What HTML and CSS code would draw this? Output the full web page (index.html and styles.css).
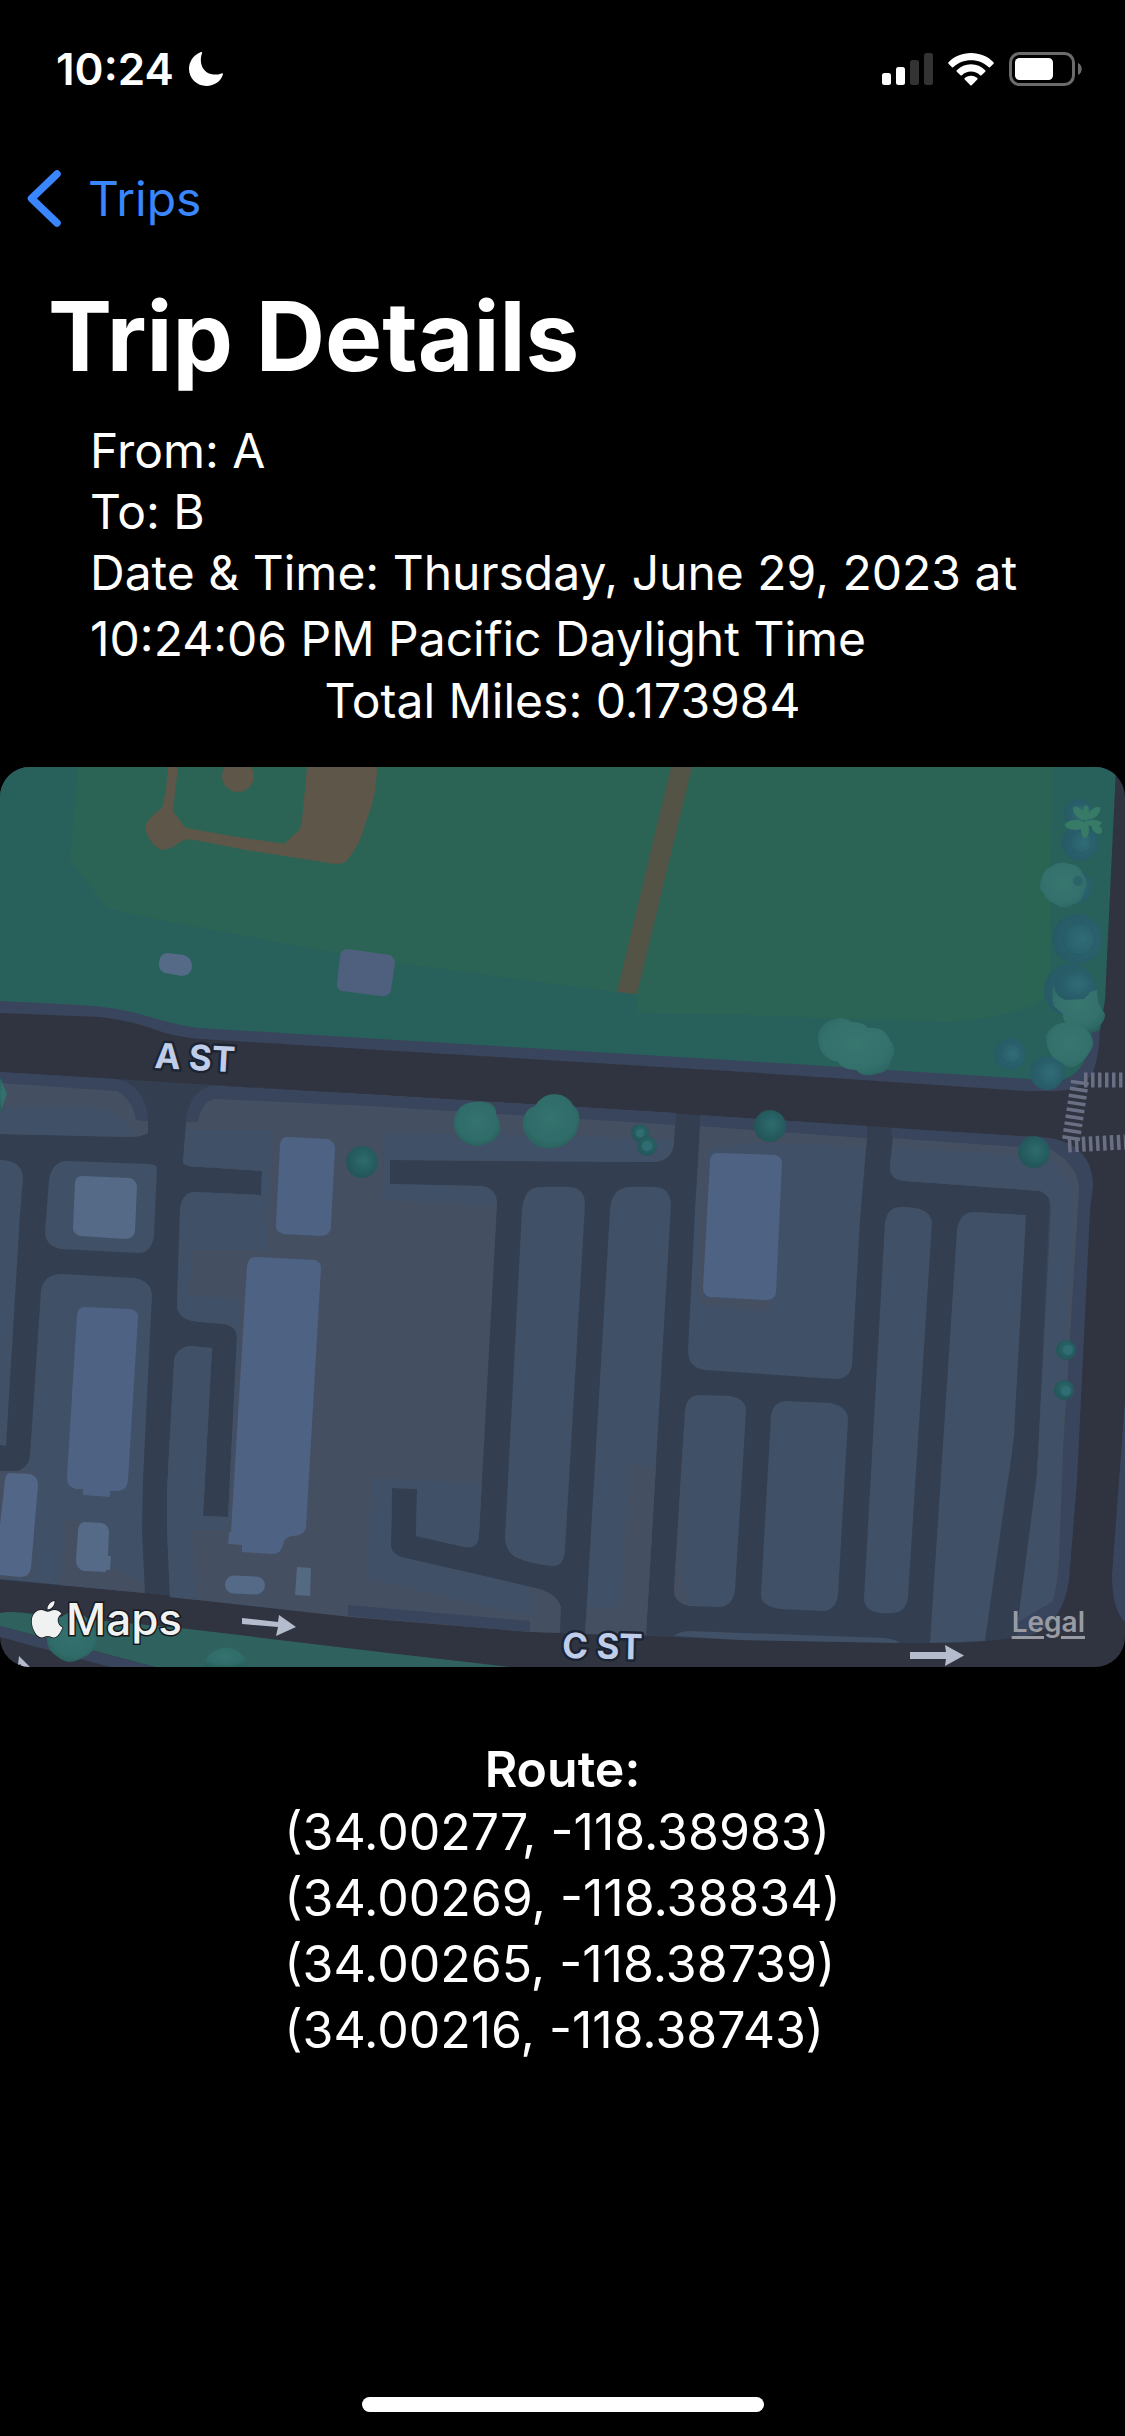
FILE: index.html
```html
<!DOCTYPE html>
<html lang="en">
<head>
<meta charset="utf-8">
<meta name="viewport" content="width=device-width, initial-scale=1">
<title>Trip Details</title>
<link rel="stylesheet" href="styles.css">
</head>
<body>
<div class="screen">
  <header class="status-bar">
    <div class="status-time">
      <span>10:24</span>
      <svg class="icon-moon" viewBox="0 0 36 36" aria-hidden="true"><path d="M12.500 1.200C5.500 4 1 10.500 1 17.800C1 27.500 8.800 35 18.500 35C26.500 35 32.800 30.500 34.900 23.600C35.200 22.500 34.600 21.900 33.500 22.400C30.500 23.500 28 23.700 25.500 23.500C18 22.800 13.500 17.500 12.900 10.500C12.700 7.500 13.100 5 14 2.300C14.400 1.200 13.700 .7 12.500 1.200Z" fill="#fff"/></svg>
    </div>
    <div class="status-icons">
      <svg class="icon-signal" viewBox="0 0 51 32" aria-hidden="true">
        <rect x="0" y="20" width="9" height="12" rx="2.500" fill="#fff"/>
        <rect x="14" y="14" width="9" height="18" rx="2.500" fill="#fff"/>
        <rect x="28" y="7" width="9" height="25" rx="2.500" fill="#333"/>
        <rect x="42" y="0" width="9" height="32" rx="2.500" fill="#333"/>
      </svg>
      <svg class="icon-wifi" viewBox="0 0 46 33" aria-hidden="true" fill="#fff">
        <path d="M23 0C32 0 40 3.500 45.500 9.200Q46.200 10 45.500 10.700L42 14.200Q41.300 14.800 40.500 14.100C36 9.800 30 7.200 23 7.200S10 9.800 5.500 14.100Q4.700 14.800 4 14.200L.5 10.700Q-.2 10 .5 9.200C6 3.500 14 0 23 0Z"/>
        <path d="M23 11.300C28.500 11.300 33.500 13.500 37.200 17.200Q37.900 18 37.200 18.700L33.500 22.300Q32.800 22.900 32 22.200C29.600 20 26.500 18.600 23 18.600S16.400 20 14 22.200Q13.200 22.900 12.500 22.300L8.800 18.700Q8.100 18 8.800 17.200C12.500 13.500 17.500 11.300 23 11.300Z"/>
        <path d="M23 22.800C25.700 22.800 28 23.800 29.300 25.100Q30 25.900 29.300 26.600L23.700 32.200Q23 32.900 22.300 32.200L16.700 26.600Q16 25.900 16.700 25.100C18 23.800 20.300 22.800 23 22.800Z"/>
      </svg>
      <svg class="icon-battery" viewBox="0 0 73 34" aria-hidden="true">
        <rect x="1.500" y="1.500" width="63" height="31" rx="9" fill="none" stroke="#6b6b6b" stroke-width="3"/>
        <rect x="6" y="6" width="38" height="22" rx="4.500" fill="#fff"/>
        <path d="M69 11C74 13 74 21 69 23Z" fill="#6b6b6b"/>
      </svg>
    </div>
  </header>

  <nav class="nav-bar">
    <a class="back-link" href="#trips">
      <svg class="icon-back" viewBox="0 0 34 57" aria-hidden="true"><path d="M30 4L4.500 28.500L30 53" fill="none" stroke="#3a86ff" stroke-width="7.500" stroke-linecap="round" stroke-linejoin="round"/></svg>
      <span>Trips</span>
    </a>
  </nav>

  <main>
    <h1 class="title">Trip Details</h1>
    <section class="details">
      <p>From: A</p>
      <p>To: B</p>
      <p class="date">Date &amp; Time: Thursday, June 29, 2023 at 10:24:06 PM Pacific Daylight Time</p>
      <p class="total">Total Miles: 0.173984</p>
    </section>

    <section class="map" aria-label="Trip map">
      <svg class="map-canvas" viewBox="0 767 1125 900" preserveAspectRatio="xMidYMid slice">
        <defs>
          <clipPath id="yard"><path d="M186 1122L183 1163Q187 1167 200 1167L262 1171L261 1195L195 1192Q182 1192 180 1210L177 1305Q177 1320 200 1322L225 1324Q237 1327 237 1337L228 1517L203 1516L212 1348L190 1346Q175 1348 174 1362L167 1490V1530L170 1597L350 1617L530 1632L560 1633L561 1607Q558 1595 540 1589L405 1558Q391 1555 391 1545L392 1488L417 1489L416 1536L460 1546Q479 1551 479 1535L497 1205Q497 1187 480 1186L390 1184V1160L655 1162Q673 1160 674 1142L676 1113L380 1095L215 1086Q190 1088 186 1122Z"/></clipPath>
          <radialGradient id="cone" cx=".55" cy=".45" r=".55"><stop offset="0" stop-color="#2f6c6d"/><stop offset=".5" stop-color="#276064"/><stop offset="1" stop-color="#235558"/></radialGradient>
          <radialGradient id="pine" cx=".6" cy=".5" r=".6"><stop offset="0" stop-color="#316d76"/><stop offset=".6" stop-color="#295f6b"/><stop offset="1" stop-color="#275a64"/></radialGradient>
          <radialGradient id="leaf" cx=".5" cy=".45" r=".6"><stop offset="0" stop-color="#34736f"/><stop offset=".7" stop-color="#306c69"/><stop offset="1" stop-color="#28605d"/></radialGradient>
          <radialGradient id="pale" cx=".5" cy=".45" r=".6"><stop offset="0" stop-color="#387670"/><stop offset=".7" stop-color="#34706c"/><stop offset="1" stop-color="#2c6763"/></radialGradient>
        </defs>

        <!-- streets -->
        <rect y="767" width="1125" height="900" fill="#2f3440"/>

        <!-- park and its sidewalk -->
        <path d="M0 767V1013L100 1017Q130 1020 165 1033Q185 1038 200 1039L380 1050L745 1072L1025 1091H1055Q1085 1090 1094 1070Q1100 1050 1100 1025L1116 767Z" fill="#39455c"/>
        <path d="M0 767V1001L80 1005Q118 1007 150 1017Q185 1027 200 1028L380 1039L745 1061L1030 1079H1065Q1082 1072 1086 1055Q1091 1050 1091 1033L1100 1030L1105 1000L1116 767Z" fill="#28615b"/>
        <path d="M78 767L70 860L107 908L160 920L310 948L397 963L617 992L637 994V1013L745 1015L950 1022Q1000 1017 1020 1010Q1052 1000 1050 980L1053 767Z" fill="#2b6454"/>
        <path fill-rule="evenodd" d="M168 767L166 790L162 808Q145 820 145 829Q152 848 163 850Q172 848 177 844Q183 840 189 839L246 850L335 864Q346 864 348 859Q360 845 366 822Q377 795 377 767H307L302 820Q300 831 297 832L285 843Q281 844 279 843L231 836L187 828Q183 827 180 820L173 811L178 767Z" fill="#5d5649"/>
        <circle cx="238" cy="776" r="16" fill="#5d5649"/>
        <path d="M671 767H692L637 994L617 992Z" fill="#535346"/>
        <path d="M167 953L184 955Q192 958 192 966Q192 975 182 976L165 973Q158 970 159 963Q160 953 167 953Z" fill="#546a86"/>
        <path d="M348 949L390 955Q395 958 395 963L391 990Q389 997 381 996L342 991Q337 990 337 984L340 956Q341 949 348 949Z" fill="#4e607d"/>

        <!-- city block, driveways -->
        <path d="M0 1072L380 1095L745 1118L1050 1138Q1092 1145 1093 1185L1090 1210L1077 1480L1069 1580Q1064 1620 1035 1634Q1010 1640 960 1643H900L740 1640L646 1636L560 1633L530 1632L350 1616L170 1596L145 1593L0 1580Z" fill="#333e50"/>

        <!-- sidewalks round the block -->
        <g fill="#39455c">
          <path d="M0 1072L117 1079Q147 1087 148 1121L136 1120L0 1095Z"/>
          <path d="M891 1128L1050 1138Q1092 1145 1093 1185L1090 1210L1077 1480L1069 1580Q1062 1622 1035 1634L1017 1638L1018 1622L1037 1475L1050 1190L893 1150Z"/>
          <path d="M1125 1400L1112 1575Q1112 1610 1125 1622Z"/>
        </g>

        <!-- west lots -->
        <path d="M0 1083L117 1091Q133 1100 136 1120L148 1121V1133Q142 1137 130 1137L0 1134Z" fill="#454f62"/>
        <path d="M0 1107H100Q112 1109 120 1117L136 1133L130 1137L0 1134Z" fill="#405066"/>
        <g fill="#405066">
          <path d="M0 1160Q22 1160 23 1178L20 1215L6 1446L0 1445Z"/>
          <path d="M68 1161L150 1164Q157 1165 157 1168L154 1235Q152 1253 138 1253L60 1249Q45 1245 45 1232L49 1180Q52 1161 68 1161Z"/>
          <path d="M62 1274L135 1278Q151 1281 152 1295L143 1480L142 1530L145 1593L0 1579V1471L15 1472Q29 1468 30 1455L41 1290Q44 1274 62 1274Z"/>
        </g>
        <path d="M64 1520L80 1521L112 1568L142 1582L145 1593L60 1585ZM0 1471H36L34 1577L0 1579Z" fill="#454f62"/>
        <path d="M82 1176L130 1178Q136 1180 137 1186L135 1232Q133 1239 126 1239L80 1236Q73 1234 73 1228L75 1182Q76 1176 82 1176Z" fill="#546a86"/>
        <path d="M85 1307L130 1309Q139 1311 138 1318L128 1480Q127 1491 118 1491H110V1497L83 1495V1489H76Q66 1487 67 1476L77 1315Q78 1307 85 1307Z" fill="#4e6284"/>
        <path d="M10 1473L30 1474Q38 1476 38 1485L31 1568Q30 1577 20 1577L0 1575V1525L5 1480Q6 1473 10 1473Z" fill="#526687"/>
        <path d="M85 1522L102 1523Q109 1525 109 1532L108 1556H111L110 1570H106V1572L84 1571Q76 1569 76 1560L78 1530Q79 1522 85 1522Z" fill="#546a86"/>

        <!-- central yard -->
        <g clip-path="url(#yard)">
          <rect x="160" y="1080" width="530" height="560" fill="#454f62"/>
          <g fill="#405066">
            <path d="M180 1130H272L267 1250H192L190 1296L240 1298V1340L228 1530H192L196 1600H160Z"/>
            <path d="M384 1133L600 1137L676 1140V1210L500 1206L382 1200Z"/>
            <path d="M372 1478L482 1483V1560L535 1592L530 1617L480 1605L367 1578Z"/>
          </g>
          <path d="M186 1122Q190 1088 215 1086L380 1095L676 1113V1125L370 1106L215 1099Q201 1102 198 1122ZM348 1605L530 1621V1632L348 1616Z" fill="#39455c"/>
        </g>
        <g fill="#4e6284">
          <path d="M287 1137L328 1139Q335 1142 335 1148L331 1225Q331 1236 320 1236L283 1234Q275 1231 276 1225L280 1145Q281 1137 287 1137Z"/>
          <path d="M256 1257L315 1260Q321 1262 321 1268L306 1528Q304 1536 292 1536Q284 1537 283 1545Q281 1554 272 1554L242 1552V1545L228 1544L229 1532H231L247 1266Q248 1257 256 1257Z"/>
        </g>
        <rect x="225" y="1576" width="40" height="18" rx="9" transform="rotate(2 245 1585)" fill="#546a86"/>
        <path d="M297 1567L311 1568L310 1596L295 1595Z" fill="#546a80"/>

        <!-- east lots -->
        <g fill="#405066">
          <path d="M540 1187H570Q585 1188 585 1205L565 1550Q564 1567 552 1566Q530 1564 515 1557Q505 1550 505 1537L522 1210Q524 1187 540 1187Z"/>
          <path d="M630 1187H655Q670 1187 671 1205L646 1635L585 1634L610 1210Q612 1187 630 1187Z"/>
          <path d="M700 1126L867 1138L860 1220L852 1365Q850 1379 835 1379L705 1370Q688 1368 688 1350L695 1210Z"/>
          <path d="M700 1395L730 1396Q747 1399 746 1412L735 1590Q733 1607 718 1607L690 1606Q674 1603 674 1590L685 1410Q687 1395 700 1395Z"/>
          <path d="M787 1401L830 1403Q848 1406 848 1420L838 1595Q836 1611 822 1611L780 1609Q760 1606 761 1594L771 1415Q774 1401 787 1401Z"/>
          <path d="M900 1207Q930 1206 932 1222L908 1597Q906 1613 892 1613Q863 1615 864 1597L885 1222Q888 1207 900 1207Z"/>
          <path d="M975 1212L1026 1215L1014 1435Q1012 1455 1005 1500L985 1641L930 1643L957 1230Q960 1211 975 1212Z"/>
          <path d="M674 1636Q680 1631 690 1631L885 1638Q895 1639 900 1643L740 1640Z"/>
        </g>
        <path d="M893 1138L1050 1149Q1079 1165 1079 1190L1063 1450L1059 1560Q1057 1590 1052 1602L1018 1622L1037 1475L1051 1210Q1051 1195 1040 1191L905 1181Q889 1180 890 1165Z" fill="#454f62"/>
        <path d="M892 1147L1045 1157Q1073 1175 1073 1195L1061 1450L1057 1560Q1057 1590 1050 1602L1018 1622L1037 1475L1051 1210Q1051 1195 1040 1191L905 1181Q889 1180 890 1165Z" fill="#405066"/>
        <path d="M700 1126L867 1138L866 1147L760 1142L708 1148L704 1298L770 1300V1312L700 1304L697 1290ZM630 1465L656 1466L646 1635L585 1634L587 1607L620 1609ZM685 1410L681 1540Q682 1590 690 1606Q674 1603 674 1590Z" fill="#454f62"/>
        <path d="M700 1115L867 1126V1138L700 1126Z" fill="#39455c"/>
        <path d="M717 1153L775 1155Q782 1157 782 1163L776 1292Q775 1301 765 1300L710 1297Q703 1295 703 1288L710 1160Q711 1153 717 1153Z" fill="#4e6284"/>
        <path d="M891 1128L1050 1138L1050 1149L893 1138Z" fill="#39455c"/>

        <!-- strip south of C St -->
        <path d="M0 1613Q10 1610 40 1615L180 1628L380 1652L510 1667H155L0 1626Z" fill="#2f625e"/>
        <path d="M0 1626L155 1667H110L0 1637Z" fill="#39455c"/>

        <!-- crosswalks -->
        <g fill="none" stroke="#6b6f84">
          <path d="M1080 1081L1071 1140" stroke-width="18" stroke-dasharray="3.500 3.500"/>
          <path d="M1084 1080H1125" stroke-width="15" stroke-dasharray="3.500 3.500"/>
          <path d="M1068 1145L1125 1142" stroke-width="15" stroke-dasharray="3.500 3.500"/>
        </g>

        <!-- trees -->
        <g fill="url(#pine)">
          <circle cx="1079" cy="814" r="15"/><circle cx="1080" cy="843" r="18"/><circle cx="1075" cy="887" r="17"/>
          <circle cx="1077" cy="939" r="25"/><circle cx="1070" cy="990" r="26"/><circle cx="1010" cy="1054" r="16"/><circle cx="1047" cy="1073" r="17"/>
        </g>
        <g fill="none" stroke="#24586a" stroke-width="1" opacity=".6">
          <circle cx="1079" cy="939" r="16"/><circle cx="1081" cy="842" r="11"/><circle cx="1011" cy="1053" r="10"/>
        </g>
        <g fill="url(#pale)">
          <path d="M1040 884Q1042 870 1052 866Q1060 860 1070 864Q1080 865 1083 874Q1090 882 1084 891Q1083 903 1074 904Q1064 911 1055 904Q1044 900 1044 893Q1038 889 1040 884Z"/>
          <path d="M1055 980Q1050 994 1054 1006L1063 1014Q1062 1024 1075 1030H1089Q1097 1030 1102 1023Q1108 1015 1102 1010L1098 1002L1097 990L1090 992L1083 980Z"/>
          <path d="M1046 1036Q1050 1025 1062 1023Q1080 1019 1087 1030Q1098 1042 1089 1053Q1083 1063 1076 1066Q1068 1070 1062 1063Q1046 1056 1046 1036Z"/>
          <path d="M818 1036Q820 1023 832 1020Q842 1015 852 1022Q862 1021 868 1028Q884 1026 890 1040Q898 1050 891 1060Q889 1073 875 1074Q864 1078 856 1070Q843 1070 838 1062Q818 1058 818 1036Z"/>
        </g>
        <path d="M1054 984Q1056 970 1072 968Q1090 968 1094 982Q1092 992 1084 999L1066 1000Q1054 996 1054 984Z" fill="url(#pine)"/>
        <circle cx="1078" cy="881" r="5" fill="#2b646a"/>
        <g fill="#377b66">
          <ellipse cx="1086" cy="813" rx="3" ry="8"/><ellipse cx="1085" cy="830" rx="4" ry="8"/><ellipse cx="1076" cy="825" rx="11" ry="5"/><ellipse cx="1093" cy="823" rx="9" ry="3"/>
          <ellipse cx="1079" cy="813" rx="4" ry="8" transform="rotate(-40 1079 813)"/><ellipse cx="1094" cy="813" rx="4" ry="8" transform="rotate(45 1094 813)"/><ellipse cx="1097" cy="829" rx="4" ry="6" transform="rotate(-50 1097 829)"/>
        </g>
        <g fill="url(#cone)">
          <circle cx="362" cy="1162" r="16"/><circle cx="770" cy="1126" r="16"/><circle cx="1034" cy="1152" r="16"/>
          <circle cx="640" cy="1133" r="9"/><circle cx="647" cy="1146" r="10"/><circle cx="1066" cy="1350" r="10"/><circle cx="1064" cy="1390" r="10"/>
        </g>
        <g fill="#2f6d72"><circle cx="640" cy="1133" r="4"/><circle cx="647" cy="1146" r="5"/><circle cx="1068" cy="1350" r="5"/><circle cx="1066" cy="1391" r="5"/></g>
        <g fill="url(#leaf)">
          <path d="M454 1123Q455 1107 468 1103Q478 1100 490 1103Q497 1107 496 1114Q503 1128 499 1134Q494 1142 488 1143Q480 1147 470 1145Q454 1138 454 1123Z"/>
          <path d="M523 1120Q525 1109 535 1106Q542 1094 555 1094Q568 1095 573 1105Q581 1112 579 1122Q578 1135 568 1142Q558 1150 545 1148Q535 1148 528 1138Q521 1130 523 1120Z"/>
          <path d="M0 1077L7 1094L0 1113Z"/>
          <path d="M47 1637Q52 1620 70 1612Q92 1612 98 1640Q95 1653 82 1658Q68 1666 58 1657Q46 1650 47 1637Z"/>
          <path d="M203 1667Q206 1654 217 1650Q226 1645 236 1650Q247 1656 247 1667Z"/>
        </g>

        <!-- one-way arrows and street names -->
        <g fill="#b5bccd">
          <path d="M242 1618L278 1622L279 1615L296 1627L276 1636L278 1627L242 1624Z"/>
          <path d="M910 1652H946L945 1645L964 1655.500L945 1666L946 1659H910Z"/>
          <path d="M19 1656L30 1667H20L21 1664L18 1665Z"/>
        </g>
        <g class="street-name">
          <text x="154" y="1068" transform="rotate(3 154 1068)">A ST</text>
          <text x="562" y="1658" transform="rotate(1 562 1658)">C ST</text>
        </g>
      </svg>
      <div class="map-overlay">
        <div class="map-brand">
          <svg class="icon-apple" viewBox="0 0 32 38" aria-hidden="true"><path d="M23.500 1C24 5 20.500 9.500 16.500 9.500C16 5.500 19.500 1.500 23.500 1ZM16.800 11.800C18.500 11.800 20.300 10 23.500 10C26.300 10 29 11.500 30.500 13.800C25 17 25.700 25 31.500 27.500C30 31.500 26.500 37.500 23 37.500C20.500 37.500 19.500 36 16.700 36C13.900 36 12.900 37.500 10.500 37.500C6 37.500 .8 29 .8 21.500C.8 14 5.500 10 10 10C13 10 15.200 11.800 16.800 11.800Z" fill="#f0f2f2" stroke="#15181d" stroke-width="1.500" paint-order="stroke"/></svg>
          <span>Maps</span>
        </div>
        <a class="legal-link" href="#legal">Legal</a>
      </div>
    </section>

    <section class="route">
      <h2>Route:</h2>
      <ul>
        <li>(34.00277, -118.38983)</li>
        <li>(34.00269, -118.38834)</li>
        <li>(34.00265, -118.38739)</li>
        <li>(34.00216, -118.38743)</li>
      </ul>
    </section>
  </main>

  <div class="home-indicator"></div>
</div>
</body>
</html>
```
FILE: styles.css
```css
* {
  box-sizing: border-box;
}

body {
  margin: 0;
  background: #000;
  color: #fff;
  font-family: Inter, "Liberation Sans", sans-serif;
  font-size: 48px;
  line-height: 61px;
}

h1, h2, p, ul {
  margin: 0;
  padding: 0;
}

svg {
  display: block;
}

.screen {
  display: flex;
  flex-direction: column;
  min-height: 100vh;
}

.status-bar {
  display: flex;
  align-items: center;
  justify-content: space-between;
  height: 132px;
  padding: 6px 43px 0 56px;
}

.status-time {
  display: flex;
  align-items: center;
  gap: 14px;
  font-size: 44px;
  font-weight: 600;
}

.status-icons {
  display: flex;
  align-items: center;
  gap: 15px;
}

.icon-moon {
  width: 36px;
  height: 36px;
}

.icon-signal {
  width: 51px;
  height: 32px;
}

.icon-wifi {
  width: 46px;
  height: 33px;
}

.icon-battery {
  width: 73px;
  height: 34px;
}

.nav-bar {
  display: flex;
  align-items: center;
  height: 132px;
  padding-left: 27px;
}

.back-link {
  display: flex;
  align-items: center;
  gap: 27px;
  color: #3a86ff;
  text-decoration: none;
}

.icon-back {
  width: 34px;
  height: 57px;
}

.title {
  padding: 12px 48px 24px;
  font-size: 96px;
  font-weight: 700;
  line-height: 120px;
}

.details {
  padding: 0 90px 36px;
}

.date {
  margin: -2px 0;
  line-height: 66px;
}

.total {
  text-align: center;
}

.map {
  position: relative;
  overflow: hidden;
  border-radius: 30px;
}

.map-canvas {
  width: 100%;
  aspect-ratio: 5 / 4;
}

.street-name {
  fill: #c0cde8;
  stroke: #1c2433;
  stroke-width: 5px;
  stroke-linejoin: round;
  paint-order: stroke;
  font-size: 35px;
  font-weight: 700;
}

.map-overlay {
  position: absolute;
  inset: auto 0 0;
  display: flex;
  align-items: flex-end;
  justify-content: space-between;
  padding: 0 40px 28px 31px;
}

.map-brand {
  display: flex;
  align-items: center;
  gap: 3px;
  color: #f0f2f2;
  font-size: 44px;
  font-weight: 500;
  line-height: 40px;
  -webkit-text-stroke: 3px #15181d;
  paint-order: stroke;
}

.icon-apple {
  width: 32px;
  height: 40px;
  overflow: visible;
}

.legal-link {
  color: #999ba3;
  font-size: 28px;
  font-weight: 600;
  line-height: 34px;
  text-decoration-thickness: 3px;
  text-underline-offset: 4px;
}

.route {
  display: flex;
  flex-direction: column;
  align-items: center;
  padding-top: 72px;
  font-size: 50px;
}

.route h2 {
  font-size: 50px;
  font-weight: 600;
  line-height: 60px;
}

.route ul {
  list-style: none;
  line-height: 66px;
}

.home-indicator {
  width: 402px;
  height: 15px;
  margin: auto auto 24px;
  border-radius: 8px;
  background: #fff;
}
```
